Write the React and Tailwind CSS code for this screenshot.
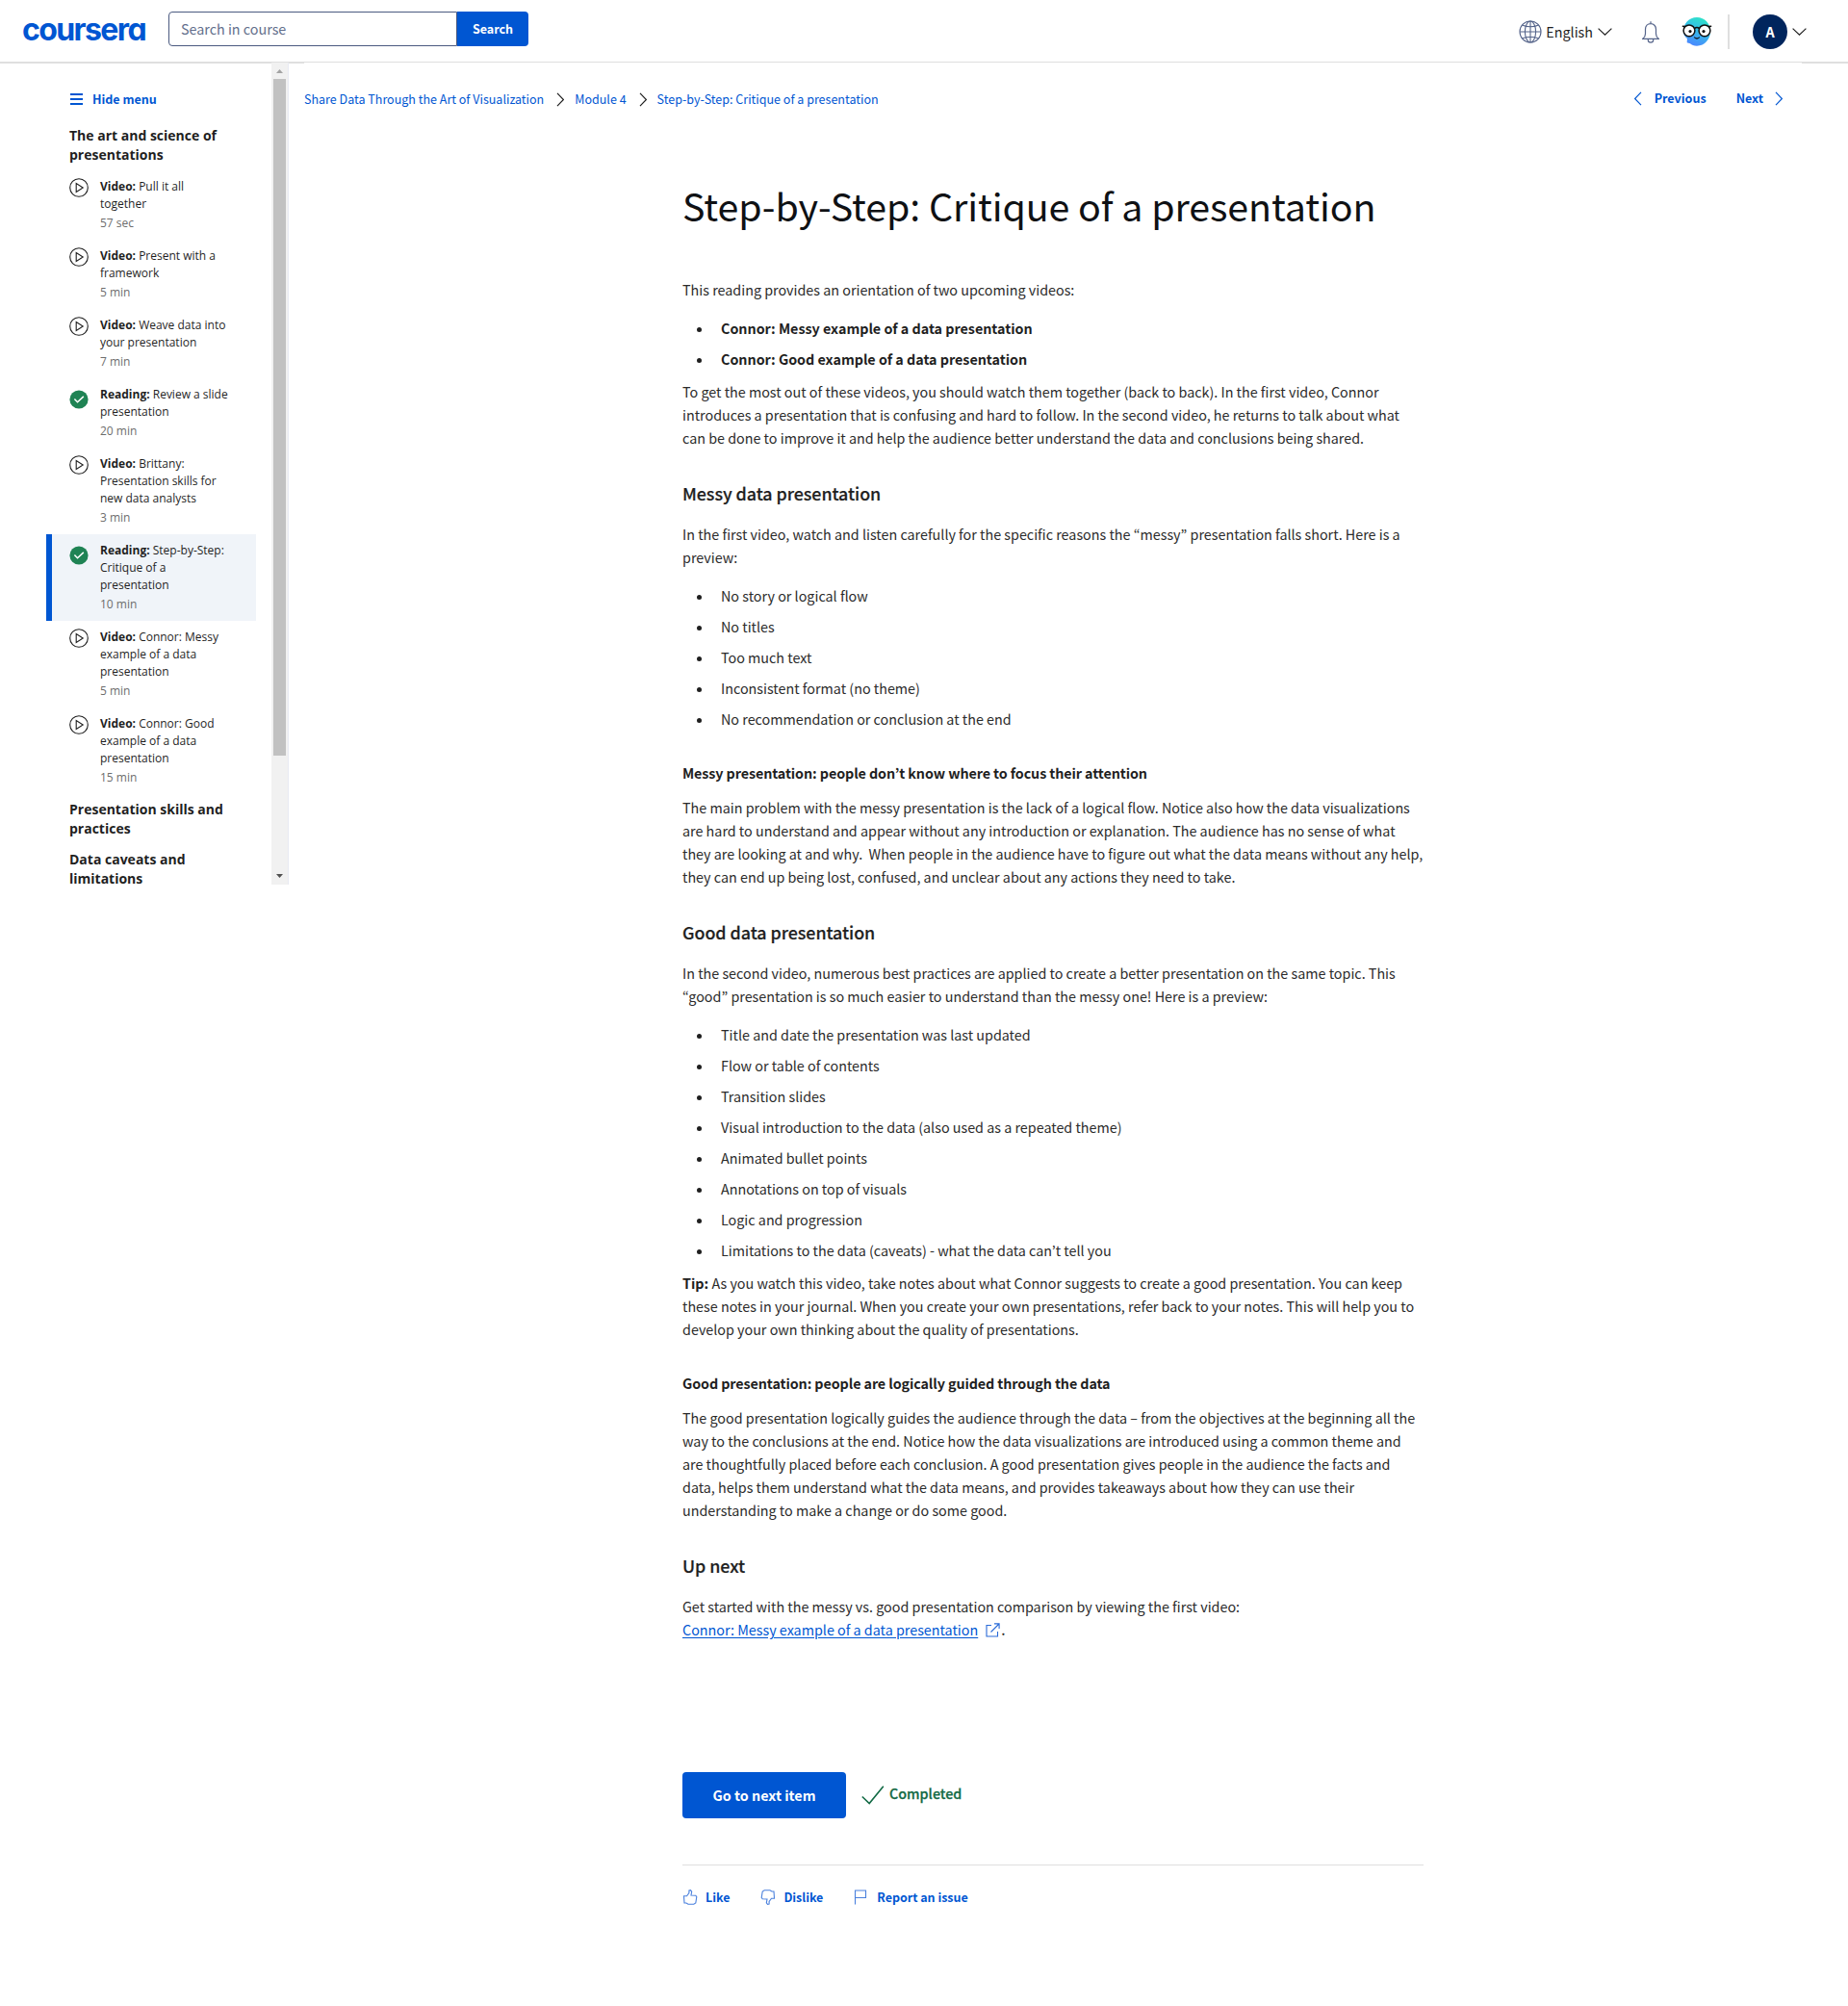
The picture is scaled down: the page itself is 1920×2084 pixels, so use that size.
import React from 'react';

const Chevron = ({ dir = 'right', className = '' }) => {
  const paths = {
    right: 'M1 .8 7.4 7.5 1 14.2',
    left: 'M7 .8 .6 7.5 7 14.2',
  };
  return (
    <svg className={`h-[15px] w-2 shrink-0 ${className}`} viewBox="0 0 8 15" fill="none" stroke="currentColor" strokeWidth="1.2">
      <path d={paths[dir]} />
    </svg>
  );
};

const ChevronDown = ({ className = '' }) => (
  <svg className={`h-2 w-[15px] shrink-0 ${className}`} viewBox="0 0 15 8" fill="none" stroke="#1f1f1f" strokeWidth="1.2">
    <path d="M.6.6 7.5 7.2 14.4.6" />
  </svg>
);

const Globe = () => (
  <svg className="h-6 w-6 shrink-0" viewBox="0 0 24 24" fill="none" stroke="#55648a" strokeWidth="1.1">
    <circle cx="12" cy="12" r="11" />
    <ellipse cx="12" cy="12" rx="5.6" ry="11" />
    <path d="M1 12h22M12 1v22M3.6 5c4.6 2.4 12.200 2.400 16.800 0M3.600 19c4.600-2.400 12.200-2.400 16.800 0" />
  </svg>
);

const Bell = () => (
  <svg className="h-[23px] w-[18px]" viewBox="0 0 18 23" fill="none" stroke="#55648a" strokeWidth="1.2">
    <path d="M9 .3v2.400M.8 18.300h16.400c-1.700-1.300-2.700-3-2.700-5.300V8.500C14.500 5 12.200 2.600 9 2.600S3.500 5 3.500 8.500V13c0 2.300-1 4-2.700 5.300Z" />
    <path d="M6.300 18.500v.9a2.700 2.700 0 0 0 5.400 0v-.9" />
  </svg>
);

const Coach = () => (
  <svg className="h-[30px] w-8" viewBox="0 0 32 30">
    <defs>
      <linearGradient id="coach" x1="0.75" y1="0" x2="0.35" y2="1">
        <stop offset="0" stopColor="#2ee6c5" />
        <stop offset=".4" stopColor="#33c3e6" />
        <stop offset="1" stopColor="#4a86ff" />
      </linearGradient>
    </defs>
    <path d="M16 0C24.300 0 30 6.500 30 14.500S24.300 29.700 16 29.700c-3 0-5.300-1-7-2.400L5.700 26.300 5.900 22C3.500 20 2 17.600 2 14.500 2 6.500 7.700 0 16 0Z" fill="url(#coach)" />
    <circle cx="8" cy="13.800" r="5.900" fill="#fff" stroke="#111" strokeWidth="1.500" />
    <circle cx="24" cy="13.800" r="5.900" fill="#fff" stroke="#111" strokeWidth="1.500" />
    <path d="M13.600 11.500c1.400-1.200 3.400-1.200 4.800 0M.8 9.200l3 .3M31.200 9.200l-3 .3" fill="none" stroke="#111" strokeWidth="1.600" />
    <circle cx="9" cy="14.600" r="1.600" fill="#111" />
    <circle cx="23" cy="14.600" r="1.600" fill="#111" />
    <path d="M13.300 20.500c1.200 2 4.200 2 5.400 0" fill="none" stroke="#111" strokeWidth="1.300" />
  </svg>
);

const PlayIcon = () => (
  <svg className="h-5 w-5 shrink-0" viewBox="0 0 20 20" fill="none" stroke="#1f1f1f" strokeWidth="1.1">
    <circle cx="10" cy="10" r="9.300" />
    <path d="M7.200 5.500v9l7-4.500Z" />
  </svg>
);

const DoneIcon = () => (
  <svg className="mt-1 h-5 w-5 shrink-0" viewBox="0 0 20 20" fill="none">
    <circle cx="10" cy="10" r="9.600" fill="#1f8354" />
    <path d="m5.400 9.600 3.100 3.200L14.800 6.900" stroke="#fff" strokeWidth="1.500" />
  </svg>
);

const items = [
  { kind: 'Video', lines: ['Pull it all', 'together'], time: '57 sec' },
  { kind: 'Video', lines: ['Present with a', 'framework'], time: '5 min' },
  { kind: 'Video', lines: ['Weave data into', 'your presentation'], time: '7 min' },
  { kind: 'Reading', lines: ['Review a slide', 'presentation'], time: '20 min', done: true },
  { kind: 'Video', lines: ['Brittany:', 'Presentation skills for', 'new data analysts'], time: '3 min' },
  { kind: 'Reading', lines: ['Step-by-Step:', 'Critique of a', 'presentation'], time: '10 min', done: true, active: true },
  { kind: 'Video', lines: ['Connor: Messy', 'example of a data', 'presentation'], time: '5 min' },
  { kind: 'Video', lines: ['Connor: Good', 'example of a data', 'presentation'], time: '15 min' },
];

const Lines = ({ lines }) =>
  lines.map((l, i) => (
    <React.Fragment key={i}>
      {i > 0 && <br />}
      {l}
    </React.Fragment>
  ));

const SectionTitle = ({ lines }) => (
  <h2 className="py-1.5 pl-6 text-sm leading-5 font-bold text-[#1f1f1f]"><Lines lines={lines} /></h2>
);

const Item = ({ item }) => (
  <div className={`flex gap-3 border-l-[6px] py-2 pl-[18px] ${item.active ? 'border-[#0056d2] bg-[#f0f4f9]' : 'border-transparent'}`}>
    {item.done ? <DoneIcon /> : <PlayIcon />}
    <div className="text-xs leading-[18px] whitespace-nowrap text-[#1f1f1f]">
      <p><b>{item.kind}:</b> <Lines lines={item.lines} /></p>
      <p className="pt-0.5 text-[#6d6d6d]">{item.time}</p>
    </div>
  </div>
);

const Para = ({ lines, className = '' }) => (
  <p className={`whitespace-pre ${className}`}><Lines lines={lines} /></p>
);

const H2 = ({ children }) => (
  <h2 className="mt-[33px] mb-[19px] text-[17.9px] leading-6 font-medium tracking-[-0.06px] text-[#1f1f1f] [-webkit-text-stroke:0.2px_#1f1f1f]">{children}</h2>
);

const H3 = ({ children }) => <h3 className="mt-8 mb-3 font-bold tracking-[-0.1px] text-[#1f1f1f]">{children}</h3>;

const List = ({ entries, className = '' }) => (
  <ul className={`mt-4 flex flex-col gap-2 ${className}`}>
    {entries.map((e) => (
      <li key={e} className="flex pl-[15px]">
        <span className="mt-[11px] mr-5 h-[5px] w-[5px] rounded-full bg-[#1f1f1f]" />
        {e}
      </li>
    ))}
  </ul>
);

export default function App() {
  return (
    <div className="h-[2084px] w-[1920px] overflow-hidden bg-white font-['Noto_Sans_CJK_KR',sans-serif] text-[14.33px] leading-6 text-[#2b2b2b]">
      <header className="flex h-[65px] border-b border-[#dfdfdf] pt-3">
        <div className="ml-[23px] w-[152px] pt-px font-['Inter',sans-serif] text-[32px] leading-9 font-bold tracking-[-1.6px] text-[#0056d2] [font-feature-settings:'cv11']">coursera</div>
        <div className="flex h-9 w-[374px]">
          <div className="flex w-[300px] items-center rounded-l border border-[#4b5a80] pl-3 text-[#636f8c]">Search in course</div>
          <button className="w-[74px] rounded-r bg-[#0056d2] text-[12.53px] font-bold text-white">Search</button>
        </div>
        <div className="ml-auto flex h-[42px] items-center pr-[43px]">
          <Globe />
          <span className="ml-1 text-[#1f1f1f]">English</span>
          <ChevronDown className="ml-[5px]" />
          <span className="ml-[31px]"><Bell /></span>
          <span className="ml-[23px]"><Coach /></span>
          <span className="ml-4 h-9 w-0.5 bg-[#dfdfdf]" />
          <span className="ml-6 flex h-9 w-9 items-center justify-center rounded-full bg-[#00255d] text-[14.33px] font-bold text-white">A</span>
          <ChevronDown className="ml-[5px]" />
        </div>
      </header>

      <div className="flex">
        <aside className="flex h-[854px] w-[300px] shrink-0 overflow-hidden font-['Open_Sans',sans-serif]">
          <div className="w-[282px] shrink-0 border-t border-[#dfdfdf] pl-12">
            <div className="flex h-[59px] items-start pt-[25px] pl-[25px]">
              <span className="mt-[6px] flex flex-col gap-[3px]">
                <i className="h-0.5 w-[13px] bg-[#0056d2]" />
                <i className="h-0.5 w-[13px] bg-[#0056d2]" />
                <i className="h-0.5 w-[13px] bg-[#0056d2]" />
              </span>
              <span className="ml-2.5 font-['Noto_Sans_CJK_KR',sans-serif] text-[12.53px] font-bold text-[#0056d2]">Hide menu</span>
            </div>
            <div className="w-[218px]">
              <SectionTitle lines={['The art and science of', 'presentations']} />
              {items.map((it, i) => <Item key={i} item={it} />)}
              <SectionTitle lines={['Presentation skills and', 'practices']} />
              <SectionTitle lines={['Data caveats and', 'limitations']} />
            </div>
          </div>
          <div className="flex w-[18px] flex-col items-center border-r border-[#e8eaf2] bg-[#f1f1f1]">
            <svg className="h-[17px] w-[17px] shrink-0" viewBox="0 0 17 17"><path d="M8.500 7 12 11H5Z" fill="#a3a3a3" /></svg>
            <div className="h-[703px] w-[13px] bg-[#c1c1c1]" />
            <svg className="mt-auto h-[17px] w-[17px] shrink-0" viewBox="0 0 17 17"><path d="M8.500 10 12 6H5Z" fill="#505050" /></svg>
          </div>
        </aside>

        <main className="w-[1620px]">
          <div className="flex h-[124px] items-start">
            <span className="h-px w-4 shrink-0 bg-[#dfdfdf]" />
            <nav className="flex items-center pt-[26px] text-[12.53px] text-[#0056d2]">
              <a>Share Data Through the Art of Visualization</a>
              <Chevron className="ml-[13px] text-[#1f1f1f]" />
              <a className="ml-[11px]">Module 4</a>
              <Chevron className="ml-[13px] text-[#1f1f1f]" />
              <a className="ml-[11px]">Step-by-Step: Critique of a presentation</a>
            </nav>
            <nav className="ml-auto flex items-center pt-[25px] pr-5 text-[12.53px] font-bold text-[#0056d2]">
              <Chevron dir="left" />
              <a className="ml-[13px]">Previous</a>
              <a className="ml-[31px]">Next</a>
              <Chevron className="ml-3" />
            </nav>
            <span className="h-px w-12 shrink-0 bg-[#dfdfdf]" />
          </div>

          <article className="ml-[409px] w-[770px]">
            <h1 className="mb-[52px] text-[39.39px] leading-[48px] tracking-[-0.08px] whitespace-nowrap text-[#0f1114]">Step-by-Step: Critique of a presentation</h1>
            <p>This reading provides an orientation of two upcoming videos:</p>
            <List
              className="font-bold tracking-[-0.02px] text-[#1f1f1f]"
              entries={['Connor: Messy example of a data presentation', 'Connor: Good example of a data presentation']}
            />
            <Para
              className="mt-2.5"
              lines={[
                'To get the most out of these videos, you should watch them together (back to back). In the first video, Connor',
                'introduces a presentation that is confusing and hard to follow. In the second video, he returns to talk about what',
                'can be done to improve it and help the audience better understand the data and conclusions being shared.',
              ]}
            />
            <H2>Messy data presentation</H2>
            <Para
              lines={[
                'In the first video, watch and listen carefully for the specific reasons the “messy” presentation falls short. Here is a',
                'preview:',
              ]}
            />
            <List
              entries={[
                'No story or logical flow',
                'No titles',
                'Too much text',
                'Inconsistent format (no theme)',
                'No recommendation or conclusion at the end',
              ]}
            />
            <H3>Messy presentation: people don’t know where to focus their attention</H3>
            <Para
              lines={[
                'The main problem with the messy presentation is the lack of a logical flow. Notice also how the data visualizations',
                'are hard to understand and appear without any introduction or explanation. The audience has no sense of what',
                'they are looking at and why.  When people in the audience have to figure out what the data means without any help,',
                'they can end up being lost, confused, and unclear about any actions they need to take.',
              ]}
            />
            <H2>Good data presentation</H2>
            <Para
              lines={[
                'In the second video, numerous best practices are applied to create a better presentation on the same topic. This',
                '“good” presentation is so much easier to understand than the messy one! Here is a preview:',
              ]}
            />
            <List
              entries={[
                'Title and date the presentation was last updated',
                'Flow or table of contents',
                'Transition slides',
                'Visual introduction to the data (also used as a repeated theme)',
                'Animated bullet points',
                'Annotations on top of visuals',
                'Logic and progression',
                'Limitations to the data (caveats) - what the data can’t tell you',
              ]}
            />
            <p className="mt-2.5 whitespace-nowrap">
              <b className="text-[#1f1f1f]">Tip:</b>{' '}
              <Lines
                lines={[
                  'As you watch this video, take notes about what Connor suggests to create a good presentation. You can keep',
                  'these notes in your journal. When you create your own presentations, refer back to your notes. This will help you to',
                  'develop your own thinking about the quality of presentations.',
                ]}
              />
            </p>
            <H3>Good presentation: people are logically guided through the data</H3>
            <Para
              lines={[
                'The good presentation logically guides the audience through the data – from the objectives at the beginning all the',
                'way to the conclusions at the end. Notice how the data visualizations are introduced using a common theme and',
                'are thoughtfully placed before each conclusion. A good presentation gives people in the audience the facts and',
                'data, helps them understand what the data means, and provides takeaways about how they can use their',
                'understanding to make a change or do some good.',
              ]}
            />
            <H2>Up next</H2>
            <p>Get started with the messy vs. good presentation comparison by viewing the first video:</p>
            <p className="flex">
              <a className="text-[#0056d2] underline underline-offset-2">Connor: Messy example of a data presentation</a>
              <svg className="mt-[5px] ml-2 h-[15px] w-[15px]" viewBox="0 0 15 15" fill="none" stroke="#2a6bd8" strokeWidth="1.1">
                <path d="M6 2.500H1v11.500h11.500V9M5.500 9.500 14 1M9 .9h5.100V6" />
              </svg>
              <span className="ml-px font-medium">.</span>
            </p>

            <div className="mt-[136px] flex h-12">
              <button className="w-[170px] rounded bg-[#0056d2] font-bold text-white">Go to next item</button>
              <svg className="mt-3.5 ml-4 h-5 w-6" viewBox="0 0 24 20" fill="none" stroke="#126a45" strokeWidth="1.600">
                <path d="m.8 11.500 7.400 7L22.800.8" />
              </svg>
              <span className="ml-[5px] pt-2.5 font-medium text-[#126a45] [-webkit-text-stroke:0.25px_#126a45]">Completed</span>
            </div>

            <div className="mt-12 flex h-[66px] items-center border-t border-[#dfdfdf] text-[12.53px] font-bold tracking-[-0.03px] text-[#0056d2]">
              <svg className="h-4 w-4" viewBox="0 0 16 16" fill="none" stroke="#4a80dd" strokeWidth="1.100">
                <path d="M1.500 6.800h3l2.400-3.300V1l1.600-.3 1.200 1.500L9 6l4.800.3 1 1.400-1 6.300-2 1.200H6L4 14H2Z" />
              </svg>
              <span className="ml-2">Like</span>
              <svg className="ml-8 h-4 w-4" viewBox="0 0 16 16" fill="none" stroke="#4a80dd" strokeWidth="1.100">
                <path d="M14.500 9.200h-3L9.100 12.500V15l-1.600.3-1.200-1.500L7 10l-4.800-.3-1-1.400 1-6.300 2-1.200H10L12 2h2Z" />
              </svg>
              <span className="ml-2">Dislike</span>
              <svg className="ml-8 h-4 w-4" viewBox="0 0 16 16" fill="none" stroke="#4a80dd" strokeWidth="1.100">
                <path d="M1.500 15.500V1h11v7.500h-11" />
              </svg>
              <span className="ml-2">Report an issue</span>
            </div>
          </article>
        </main>
      </div>
    </div>
  );
}
